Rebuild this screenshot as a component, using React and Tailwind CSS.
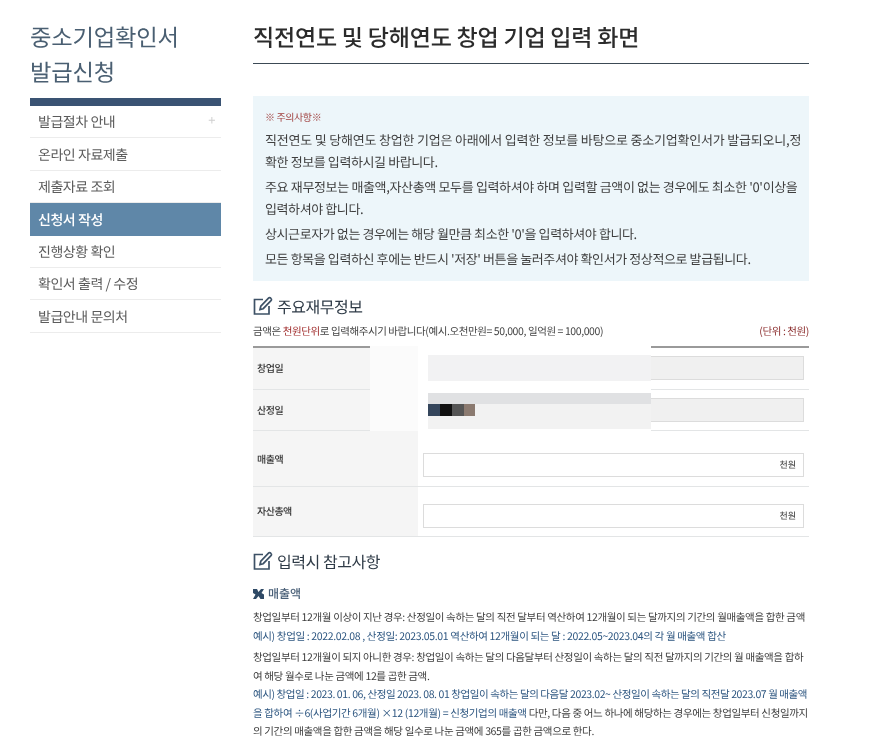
import React from "react";

const font = { fontFamily: '"Noto Sans CJK KR", "Noto Sans", sans-serif' };
const menu = ["발급절차 안내", "온라인 자료제출", "제출자료 조회", "신청서 작성", "진행상황 확인", "확인서 출력 / 수정", "발급안내 문의처"];

function Row({ label, h, inputTop, labelTop, disabled, unit }) {
  return (
    <div className="flex border-b border-[#e3e5e6]" style={{ height: h }}>
      <div className="w-[165px] shrink-0 bg-[#f5f5f5] pl-[4px] text-[10px] font-medium text-[#333] tracking-[-0.5px]">
        <div style={{ marginTop: labelTop }} className="leading-[14px]">{label}</div>
      </div>
      <div className="flex-1 pl-[5px] pr-[5px]">
        <div style={{ marginTop: inputTop }} className={`h-[24px] border border-[#dcdcdc] flex items-center justify-end pr-[7px] text-[9px] font-medium text-[#555] ${disabled ? "bg-[#f0f0f0]" : "bg-white"}`}>
          {unit}
        </div>
      </div>
    </div>
  );
}

function Heading({ children }) {
  return (
    <div className="flex items-center gap-[4px] text-[#2f3b47]">
      <svg width="20" height="20" viewBox="0 0 20 20" fill="none" stroke="#3d5166" strokeWidth="1.7" className="mt-[-1px]">
        <path d="M10 3.5H1.5V18H16V10" />
        <path d="M7 13.5l.8-3.3L15.5 2.2a1.5 1.5 0 0 1 2.2 0l.3.3a1.5 1.5 0 0 1 0 2.2L10.2 12.7z" />
      </svg>
      <span className="text-[16px] font-normal leading-[24px] tracking-[-0.45px]">{children}</span>
    </div>
  );
}

export default function App() {
  return (
    <div style={font} className="relative w-[889px] h-[739px] overflow-hidden bg-white flex pl-[30px] pt-[19px] blur-[0.45px] [text-rendering:geometricPrecision]">
      <aside className="w-[191px] shrink-0">
        <h2 className="text-[23.3px] leading-[35px] font-normal text-[#4a5f72] tracking-[-0.2px]">중소기업확인서<br />발급신청</h2>
        <div className="mt-[9px] h-[8px] bg-[#3a5373]" />
        <ul>
          {menu.map((m, i) => (
            <li key={m} className={`relative h-[32.4px] flex items-center pl-[8px] pt-[2px] text-[14px] tracking-[-0.45px] ${i === 3 ? "bg-[#5f87a8] text-white font-medium" : "text-[#5c5c5c] border-b border-[#ececec]"}`}>
              {m}
              {i === 0 && <span className="absolute right-[6px] top-[4px] text-[13px] text-[#d0d0d0]">+</span>}
            </li>
          ))}
        </ul>
      </aside>

      <main className="ml-[32px] w-[556px] shrink-0">
        <div className="h-[45px] border-b border-[#3c4a55] text-[23px] leading-[35px] font-medium text-[#2b2b2b] tracking-[-0.2px]">직전연도 및 당해연도 창업 기업 입력 화면</div>

        <div className="mt-[32px] h-[185px] bg-[#edf6fa] pl-[12px] pt-[13px] text-[13px] leading-[22px] text-[#3f3f3f] tracking-[-0.4px]">
          <div className="text-[10px] leading-[16px] text-[#a0413f] mb-[4px]">※ 주의사항※</div>
          <div className="whitespace-nowrap tracking-[-0.2px]">직전연도 및 당해연도 창업한 기업은 아래에서 입력한 정보를 바탕으로 중소기업확인서가 발급되오니,정</div>
          <div className="whitespace-nowrap">확한 정보를 입력하시길 바랍니다.</div>
          <div className="whitespace-nowrap mt-[3px] tracking-[-0.35px]">주요 재무정보는 매출액,자산총액 모두를 입력하셔야 하며 입력할 금액이 없는 경우에도 최소한 '0'이상을</div>
          <div className="whitespace-nowrap">입력하셔야 합니다.</div>
          <div className="whitespace-nowrap mt-[3px]">상시근로자가 없는 경우에는 해당 월만큼 최소한 '0'을 입력하셔야 합니다.</div>
          <div className="whitespace-nowrap mt-[3px]">모든 항목을 입력하신 후에는 반드시 '저장' 버튼을 눌러주셔야 확인서가 정상적으로 발급됩니다.</div>
        </div>

        <div className="mt-[13px]"><Heading>주요재무정보</Heading></div>
        <div className="mt-[6px] flex justify-between text-[10.5px] leading-[16px] text-[#444] tracking-[-0.41px]">
          <span>금액은 <span className="text-[#a02c2c]">천원단위</span>로 입력해주시기 바랍니다(예시.오천만원= 50,000, 일억원 = 100,000)</span>
          <span className="text-[#8a2b2b]">(단위 : 천원)</span>
        </div>

        <div className="relative mt-[6px] border-t-2 border-[#9a9a9a]">
          <Row label="창업일" h={42} inputTop={8} labelTop={13} disabled />
          <Row label="산정일" h={41} inputTop={8} labelTop={13} disabled />
          <Row label="매출액" h={56} inputTop={22} labelTop={21} unit="천원" />
          <Row label="자산총액" h={50} inputTop={17} labelTop={17} unit="천원" />

          <div className="absolute left-[117px] top-[-2px] w-[48px] h-[85px] bg-[#fbfbfb]" />
          <div className="absolute left-[165px] top-[-2px] w-[233px] h-[85px] bg-white" />
          <div className="absolute left-[175px] top-[7px] w-[223px] h-[26px] bg-[#f2f2f3]" />
          <div className="absolute left-[175px] top-[45px] w-[223px] h-[11px] bg-[#e0e1e3]" />
          <div className="absolute left-[175px] top-[56px] w-[223px] h-[25px] bg-[#f2f2f2]" />
          <div className="absolute left-[175px] top-[56px] h-[12px] flex">
            <i className="block w-[12px] bg-[#35465c]" />
            <i className="block w-[12px] bg-[#111]" />
            <i className="block w-[12px] bg-[#555]" />
            <i className="block w-[11px] bg-[#8b7a70]" />
          </div>
        </div>

        <div className="mt-[12px]"><Heading>입력시 참고사항</Heading></div>

        <div className="mt-[13px] flex items-center gap-[4px] text-[12px] leading-[16px] font-medium text-[#4a6078]">
          <svg width="11" height="10" viewBox="0 0 11 10" fill="#2f4a66">
            <path d="M0 0h4l1.5 3L8 0h3L8.5 4 11 5.5V10H7.5L5.5 7 3 10H0l2.5-4.5L0 4z" />
          </svg>
          매출액
        </div>

        <div className="mt-[7px] text-[10.5px] leading-[18.5px] text-[#3c3c3c] tracking-[-0.35px] whitespace-nowrap">
          <div>창업일부터 12개월 이상이 지난 경우: 산정일이 속하는 달의 직전 달부터 역산하여 12개월이 되는 달까지의 기간의 월매출액을 합한 금액</div>
          <div className="text-[#2d5680]">예시) 창업일 : 2022.02.08 , 산정일: 2023.05.01 역산하여 12개월이 되는 달 : 2022.05~2023.04의 각 월 매출액 합산</div>
          <div className="mt-[3px]">창업일부터 12개월이 되지 아니한 경우: 창업일이 속하는 달의 다음달부터 산정일이 속하는 달의 직전 달까지의 기간의 월 매출액을 합하</div>
          <div>여 해당 월수로 나눈 금액에 12를 곱한 금액.</div>
          <div className="text-[#2d5680] tracking-[-0.41px]">예시) 창업일 : 2023. 01. 06, 산정일 2023. 08. 01 창업일이 속하는 달의 다음달 2023.02~ 산정일이 속하는 달의 직전달 2023.07 월 매출액</div>
          <div><span className="text-[#2d5680]">을 합하여 ÷6(사업기간 6개월) ×12 (12개월) = 신청기업의 매출액</span> 다만, 다음 중 어느 하나에 해당하는 경우에는 창업일부터 신청일까지</div>
          <div>의 기간의 매출액을 합한 금액을 해당 일수로 나눈 금액에 365를 곱한 금액으로 한다.</div>
        </div>
      </main>
    </div>
  );
}
